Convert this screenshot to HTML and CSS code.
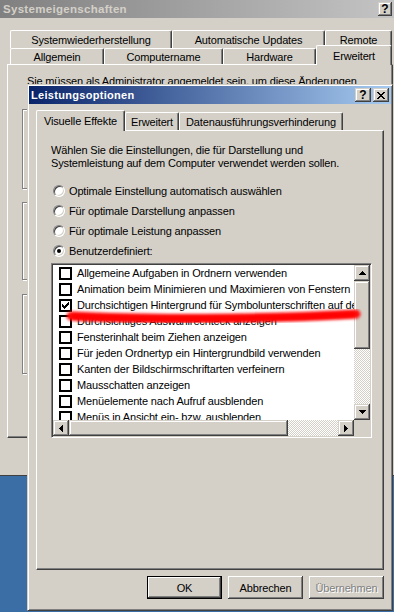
FILE: index.html
```html
<!DOCTYPE html>
<html>
    <head>
        <meta charset="utf-8">
        <title>Leistungsoptionen</title>
        <link rel="stylesheet" href="styles.css">
    </head>
    <body>
    <!-- window behind: Systemeigenschaften -->
    <div class="sysprop">
        <div class="caption caption-inactive">
            <span class="caption-title">Systemeigenschaften</span>
            <span class="cap-btn help-small">?</span>
        </div>
        <div class="tabrows">
            <div class="tabrow back">
                <div class="tab w-sys">Systemwiederherstellung</div>
                <div class="tab w-upd">Automatische Updates</div>
                <div class="tab w-rem">Remote</div>
            </div>
            <div class="tabrow front">
                <div class="tab w-allg">Allgemein</div>
                <div class="tab w-comp">Computername</div>
                <div class="tab w-hw">Hardware</div>
                <div class="tab active w-erw">Erweitert</div>
            </div>
        </div>
        <div class="panel sys-panel">
            <p class="admin-note">Sie müssen als Administrator angemeldet sein, um diese Änderungen</p>
            <div class="groupbox g1"></div>
            <div class="groupbox g2"></div>
            <div class="groupbox g3"></div>
        </div>
    </div>

    <!-- dialog in front: Leistungsoptionen -->
    <div class="dialog">
        <div class="caption caption-active">
            <span class="caption-title">Leistungsoptionen</span>
            <span class="cap-btn">?</span>
            <span class="cap-btn close-btn">
                <svg width="8" height="7" viewBox="0 0 8 7" shape-rendering="crispEdges"><path d="M0 0h2v1h-2z M6 0h2v1h-2z M1 1h2v1h-2z M5 1h2v1h-2z M2 2h4v1h-4z M3 3h2v1h-2z M2 4h4v1h-4z M1 5h2v1h-2z M5 5h2v1h-2z M0 6h2v1h-2z M6 6h2v1h-2z" fill="#000"/></svg>
            </span>
        </div>
        <div class="dlg-body">
            <div class="dtabs">
                <div class="tab active d-vis">Visuelle Effekte</div>
                <div class="tab d-erw">Erweitert</div>
                <div class="tab d-dep">Datenausführungsverhinderung</div>
            </div>
            <div class="panel dlg-panel">
                <p class="intro">Wählen Sie die Einstellungen, die für Darstellung und<br>Systemleistung auf dem Computer verwendet werden sollen.</p>
                <div class="radios">
                    <div class="radio"><span class="rb"></span>Optimale Einstellung automatisch auswählen</div>
                    <div class="radio"><span class="rb"></span>Für optimale Darstellung anpassen</div>
                    <div class="radio"><span class="rb"></span>Für optimale Leistung anpassen</div>
                    <div class="radio"><span class="rb on"></span>Benutzerdefiniert:</div>
                </div>
                <div class="listbox">
                    <div class="list-items">
                        <div class="item"><span class="cb"></span>Allgemeine Aufgaben in Ordnern verwenden</div>
                        <div class="item"><span class="cb"></span>Animation beim Minimieren und Maximieren von Fenstern</div>
                        <div class="item"><span class="cb"><svg width="7" height="7" viewBox="0 0 7 7" shape-rendering="crispEdges"><path d="M6 0h1v1h-1z M5 1h2v1h-2z M0 2h1v1h-1z M4 2h3v1h-3z M0 3h2v1h-2z M3 3h3v1h-3z M0 4h5v1h-5z M1 5h3v1h-3z M2 6h1v1h-1z" fill="#000"/></svg></span>Durchsichtigen Hintergrund für Symbolunterschriften auf dem Desktop</div>
                        <div class="item"><span class="cb"></span>Durchsichtiges Auswahlrechteck anzeigen</div>
                        <div class="item"><span class="cb"></span>Fensterinhalt beim Ziehen anzeigen</div>
                        <div class="item"><span class="cb"></span>Für jeden Ordnertyp ein Hintergrundbild verwenden</div>
                        <div class="item"><span class="cb"></span>Kanten der Bildschirmschriftarten verfeinern</div>
                        <div class="item"><span class="cb"></span>Mausschatten anzeigen</div>
                        <div class="item"><span class="cb"></span>Menüelemente nach Aufruf ausblenden</div>
                        <div class="item"><span class="cb"></span>Menüs in Ansicht ein- bzw. ausblenden</div>
                    </div>
                    <div class="vscroll">
                        <div class="sbtn"><svg width="7" height="4" viewBox="0 0 7 4" shape-rendering="crispEdges"><path d="M3 0h1v1h-1z M2 1h3v1h-3z M1 2h5v1h-5z M0 3h7v1h-7z"/></svg></div>
                        <div class="thumb vthumb"></div>
                        <div class="track"></div>
                        <div class="sbtn"><svg width="7" height="4" viewBox="0 0 7 4" shape-rendering="crispEdges"><path d="M0 0h7v1h-7z M1 1h5v1h-5z M2 2h3v1h-3z M3 3h1v1h-1z"/></svg></div>
                    </div>
                    <div class="hscroll">
                        <div class="sbtn"><svg width="4" height="7" viewBox="0 0 4 7" shape-rendering="crispEdges"><path d="M3 0h1v7h-1z M2 1h1v5h-1z M1 2h1v3h-1z M0 3h1v1h-1z"/></svg></div>
                        <div class="thumb hthumb"></div>
                        <div class="track"></div>
                        <div class="sbtn"><svg width="4" height="7" viewBox="0 0 4 7" shape-rendering="crispEdges"><path d="M0 0h1v7h-1z M1 1h1v5h-1z M2 2h1v3h-1z M3 3h1v1h-1z"/></svg></div>
                    </div>
                    <div class="corner"></div>
                </div>
            </div>
            <div class="buttons">
                <button class="btn default">OK</button>
                <button class="btn">Abbrechen</button>
                <button class="btn" disabled>Übernehmen</button>
            </div>
        </div>
    </div>

    <!-- red marker stroke drawn over the screenshot -->
    <svg class="scribble" width="310" height="30" viewBox="0 0 310 30">
        <defs>
            <filter id="soft" x="-10%" y="-100%" width="120%" height="300%">
                <feGaussianBlur stdDeviation="1.6"/>
            </filter>
        </defs>
        <path d="M11 15 C 80 18.5, 200 18.5, 296 13" stroke="#ff1010" stroke-width="9" stroke-linecap="round" fill="none" filter="url(#soft)"/>
        <path d="M14 15.5 C 80 18.5, 200 18.5, 293 13.5" stroke="#ff0000" stroke-width="5" stroke-linecap="round" fill="none" filter="url(#soft)"/>
    </svg>
    </body>
</html>
```

FILE: styles.css
```css
body {
    margin: 0;
    width: 394px;
    height: 612px;
    overflow: hidden;
    position: relative;
    background: #3a6ea5;
    font-family: "Liberation Sans", Arial, sans-serif;
    font-size: 11px;
    letter-spacing: -0.15px;
    color: #000;
}

p {
    margin: 0;
}

/* title bars */
.caption {
    height: 18px;
    display: flex;
    align-items: center;
    padding: 0 2px 0 2px;
    font-weight: bold;
    letter-spacing: 0.3px;
}

.caption-inactive {
    background: linear-gradient(to right, #808080, #c4c4c4);
    color: #d4d0c8;
    padding-left: 3px;
    font-size: 11.5px;
}

.caption-active {
    background: linear-gradient(to right, #0a246a, #a6caf0);
    color: #fff;
}

.caption-title {
    flex: 1;
}

.cap-btn {
    width: 16px;
    height: 14px;
    margin-left: 2px;
    box-sizing: border-box;
    background: #d4d0c8;
    box-shadow: inset -1px -1px #404040, inset 1px 1px #d4d0c8, inset -2px -2px #808080, inset 2px 2px #fff;
    color: #000;
    font-size: 12px;
    letter-spacing: 0;
    display: flex;
    align-items: center;
    justify-content: center;
}

.help-small {
    width: 14px;
}

/* shared 3d panel and tabs */
.panel {
    box-sizing: border-box;
    background: #d4d0c8;
    border: 1px solid;
    border-color: #fff #404040 #404040 #fff;
    box-shadow: inset -1px -1px #808080;
}

.tab {
    box-sizing: border-box;
    background: #d4d0c8;
    border: 1px solid;
    border-bottom: none;
    border-color: #fff #404040 #fff #fff;
    border-radius: 2px 2px 0 0;
    box-shadow: inset -1px 0 #808080;
    display: flex;
    align-items: center;
    justify-content: center;
    white-space: nowrap;
}

.tab.active {
    position: relative;
    z-index: 1;
}

/* background window */
.sysprop {
    position: absolute;
    left: 0;
    top: 0;
    width: 394px;
    height: 476px;
    box-sizing: border-box;
    background: #d4d0c8;
    border-bottom: 1px solid #404040;
}

.tabrows {
    margin: 12px 0 0 10px;
}

.tabrow {
    display: flex;
}

.tabrow.back .tab {
    height: 18px;
}

.tabrow.front {
    height: 19px;
    margin-top: -3px;
    align-items: flex-end;
}

.tabrow.front .tab {
    height: 16px;
}

.tabrow.front .tab.active {
    height: 20px;
    margin-bottom: -1px;
}

.w-sys { width: 162px; }
.w-upd { width: 153px; }
.w-rem { width: 67px; }
.w-allg { width: 94px; }
.w-comp { width: 119px; }
.w-hw { width: 93px; }
.w-erw { width: 76px; }

.sys-panel {
    margin-left: 7px;
    width: 386px;
    height: 374px;
    padding-top: 10px;
}

.admin-note {
    margin-left: 19px;
    line-height: 13px;
    white-space: nowrap;
}

.groupbox {
    margin-left: 14px;
    width: 340px;
    box-sizing: border-box;
    border: 1px solid #808080;
    box-shadow: inset 1px 1px #fff, 1px 1px #fff;
}

.g1 { margin-top: 21px; height: 80px; }
.g2 { margin-top: 13px; height: 78px; }
.g3 { margin-top: 14px; height: 80px; }

/* dialog */
.dialog {
    position: absolute;
    left: 27px;
    top: 84px;
    width: 366px;
    height: 527px;
    box-sizing: border-box;
    background: #d4d0c8;
    border: 1px solid;
    border-color: #d4d0c8 #404040 #404040 #d4d0c8;
    padding: 2px;
    box-shadow: inset 1px 1px #fff, inset -1px -1px #808080;
}

.dialog .caption {
    margin: -1px;
}

.dlg-body {
    padding: 7px 6px 0 6px;
}

.dtabs {
    display: flex;
    align-items: flex-end;
    height: 20px;
}

.dtabs .tab {
    height: 18px;
}

.dtabs .tab.active {
    height: 21px;
    margin-bottom: -1px;
}

.d-vis { width: 89px; }
.d-erw { width: 54px; }
.d-dep { width: 164px; }

.dlg-panel {
    height: 440px;
    padding-top: 13px;
}

.intro {
    margin-left: 14px;
    line-height: 13px;
}

.radios {
    margin-top: 11px;
}

.radio {
    display: flex;
    align-items: center;
    height: 20px;
}

.rb {
    position: relative;
    flex: none;
    width: 12px;
    height: 12px;
    box-sizing: border-box;
    margin: 0 4px 0 16px;
    border-radius: 50%;
    background: #fff;
    border: 1px solid;
    border-color: #808080 #fff #fff #808080;
    box-shadow: inset 1px 1px #404040, inset -1px -1px #d4d0c8;
}

.rb.on::after {
    content: "";
    position: absolute;
    left: 3px;
    top: 3px;
    width: 4px;
    height: 4px;
    border-radius: 50%;
    background: #000;
}

/* list view with checkboxes */
.listbox {
    margin: 2px 0 0 14px;
    width: 321px;
    height: 175px;
    box-sizing: border-box;
    border: 1px solid;
    border-color: #808080 #fff #fff #808080;
    box-shadow: inset 1px 1px #404040, inset -1px -1px #d4d0c8;
    padding: 1px;
    background: #fff;
    display: grid;
    grid-template-columns: 1fr 16px;
    grid-template-rows: 1fr 16px;
}

.list-items {
    overflow: hidden;
    white-space: nowrap;
}

.item {
    display: flex;
    align-items: center;
    height: 16px;
}

.cb {
    flex: none;
    width: 13px;
    height: 13px;
    box-sizing: border-box;
    margin: 0 5px 0 6px;
    border: 2px solid #000;
    background: #fff;
    display: flex;
    align-items: center;
    justify-content: center;
}

.vscroll {
    display: flex;
    flex-direction: column;
}

.hscroll {
    display: flex;
}

.sbtn,
.thumb {
    flex: none;
    background: #d4d0c8;
    box-shadow: inset -1px -1px #404040, inset 1px 1px #d4d0c8, inset -2px -2px #808080, inset 2px 2px #fff;
}

.sbtn {
    width: 16px;
    height: 16px;
    display: flex;
    align-items: center;
    justify-content: center;
}

.vthumb {
    height: 68px;
}

.hthumb {
    width: 219px;
}

.track {
    flex: 1;
    background: repeating-conic-gradient(#d4d0c8 0 25%, #fff 0 50%) 0 0 / 2px 2px;
}

.corner {
    background: #d4d0c8;
}

/* push buttons */
.buttons {
    display: flex;
    justify-content: flex-end;
    gap: 6px;
    margin-top: 6px;
}

.btn {
    width: 75px;
    height: 23px;
    box-sizing: border-box;
    padding: 0;
    border: none;
    background: #d4d0c8;
    box-shadow: inset -1px -1px #404040, inset 1px 1px #fff, inset -2px -2px #808080;
    font-family: inherit;
    font-size: 11px;
    letter-spacing: -0.15px;
    color: #000;
}

.btn.default {
    border: 1px solid #000;
}

.btn:disabled {
    color: #808080;
    text-shadow: 1px 1px #fff;
}

.scribble {
    position: absolute;
    left: 60px;
    top: 301px;
}
```
